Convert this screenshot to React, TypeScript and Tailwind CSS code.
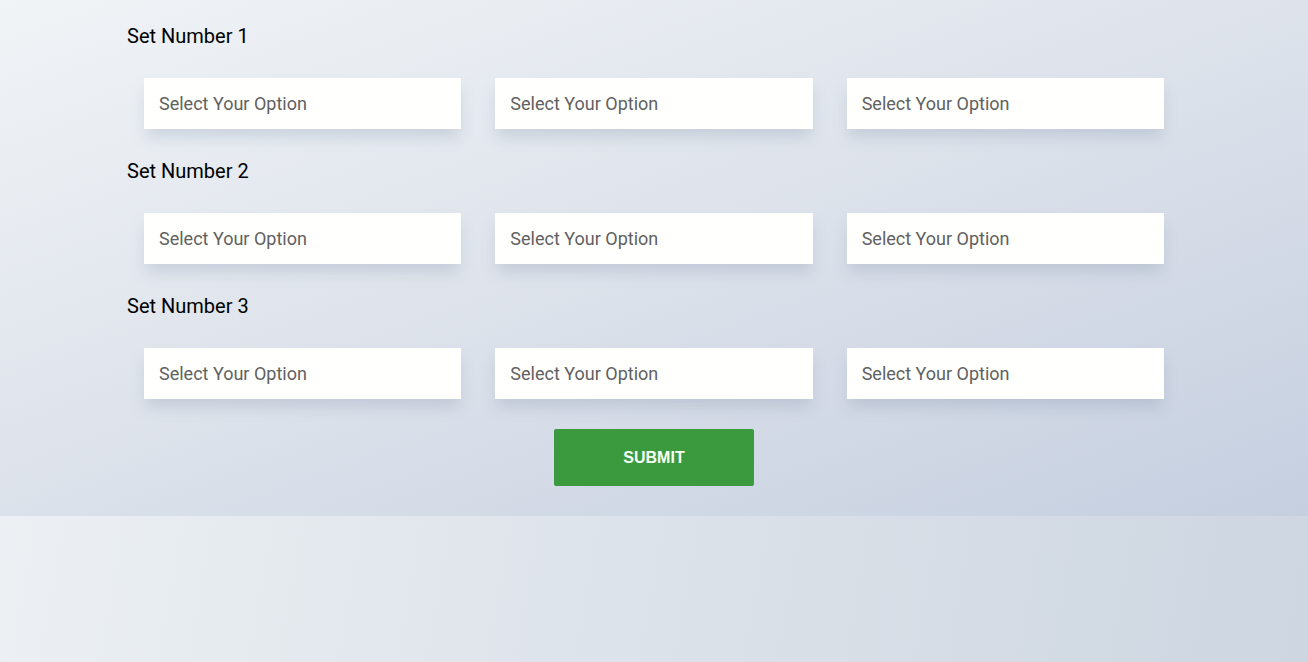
import React from "react";

const sets = ["Set Number 1", "Set Number 2", "Set Number 3"];

export default function App() {
  return (
    <div className="w-full h-[662px] flex flex-col bg-[linear-gradient(100deg,#eef2f5_0%,#dde3ea_50%,#cdd6e1_100%)]">
      <div className="h-[516px] shrink-0 bg-[linear-gradient(160deg,#f0f4f7_0%,#dfe4ec_45%,#c5cfe0_100%)] pt-[22px] pb-[30px]">
        <div className="w-[1054px] mx-auto">
          {sets.map((s) => (
            <div key={s} className="pb-[28px]">
              <div className="h-[28px] leading-[28px] text-[20px] text-black font-['Roboto',sans-serif]">
                {s}
              </div>
              <div className="grid grid-cols-3 mt-[28px]">
                {[0, 1, 2].map((i) => (
                  <div key={i} className="px-[17px]">
                    <div className="h-[51px] bg-[#fffffd] flex items-center pl-[15px] text-[18px] text-[#616161] font-['Roboto',sans-serif] shadow-[0_10px_14px_-2px_rgba(120,135,160,0.25)]">
                      Select Your Option
                    </div>
                  </div>
                ))}
              </div>
            </div>
          ))}
          <div className="flex justify-center pt-[2px]">
            <button className="w-[200px] h-[57px] rounded-[2px] bg-[#3c9a3e] text-[#f5fff5] font-bold text-[16px] font-['Liberation_Sans',Arial,sans-serif]">
              SUBMIT
            </button>
          </div>
        </div>
      </div>
      <div className="flex-1" />
    </div>
  );
}
